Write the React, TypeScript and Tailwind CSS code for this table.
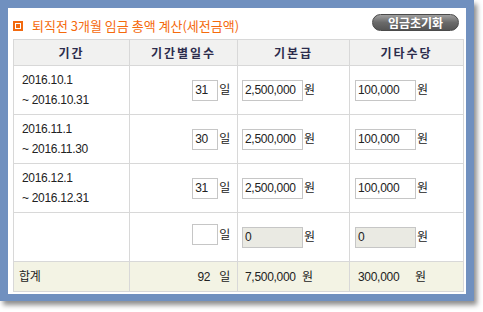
import React from "react";

const rows = [
  { from: "2016.10.1", to: "~ 2016.10.31", days: "31", pay: "2,500,000", etc: "100,000", disabled: false },
  { from: "2016.11.1", to: "~ 2016.11.30", days: "30", pay: "2,500,000", etc: "100,000", disabled: false },
  { from: "2016.12.1", to: "~ 2016.12.31", days: "31", pay: "2,500,000", etc: "100,000", disabled: false },
  { from: "", to: "", days: "", pay: "0", etc: "0", disabled: true },
];

function Input({ value, width, disabled }: { value: string; width: string; disabled?: boolean }) {
  return (
    <span
      className={`inline-block h-[21px] ${width} border border-[#c6c6c6] text-left pl-[2px] leading-[19px] align-middle ${
        disabled ? "bg-[#eaeae3]" : "bg-white"
      }`}
    >
      {value}
    </span>
  );
}

export default function App() {
  return (
    <div className="w-[483px] h-[312px] bg-white font-['Liberation_Sans','Noto_Sans_CJK_KR',sans-serif] text-[12px] tracking-[-0.3px] text-[#222]">
      <div className="w-[474px] h-[301px] bg-[#7090bf] pt-[8px] pl-[8px] pr-[8px] pb-[7px] shadow-[3px_4px_5px_rgba(0,0,0,0.45)]">
        <div className="bg-white h-full pl-[5px] pr-[3px]">
          <div className="flex justify-between h-[31px]">
            <div className="flex items-center mt-[12px] h-[12px]">
              <span className="w-[10px] h-[10px] border-2 border-[#f26a10] flex items-center justify-center mr-[9px]">
                <span className="w-[4px] h-[4px] bg-[#f26a10]" />
              </span>
              <span className="text-[#f56a0c] text-[13px] tracking-[0px] font-['Noto_Sans_CJK_KR',sans-serif] leading-[12px]">
                퇴직전 3개월 임금 총액 계산(세전금액)
              </span>
            </div>
            <button className="mt-[6px] mr-[4px] w-[87px] h-[17px] rounded-full border border-[#4a4a4a] bg-gradient-to-b from-[#a0a0a0] via-[#6a6a6a] to-[#555] text-white font-bold text-[12px] leading-[15px] tracking-[0px] font-['Noto_Sans_CJK_KR',sans-serif]">
              임금초기화
            </button>
          </div>
          <table className="w-[450px] table-fixed border-collapse">
            <colgroup>
              <col className="w-[116px]" />
              <col className="w-[108px]" />
              <col className="w-[112px]" />
              <col className="w-[114px]" />
            </colgroup>
            <thead>
              <tr className="h-[26px] bg-[#f1f1f0]">
                {["기간", "기간별일수", "기본급", "기타수당"].map((h) => (
                  <th
                    key={h}
                    className="border border-[#d8d8d8] font-bold text-[12px] tracking-[2px] text-[#2c2c4c] font-['Noto_Sans_CJK_KR',sans-serif] p-0"
                  >
                    {h}
                  </th>
                ))}
              </tr>
            </thead>
            <tbody>
              {rows.map((r, i) => (
                <tr key={i} className="h-[49px]">
                  <td className="border border-[#d8d8d8] pl-[8px] leading-[20px] align-middle">
                    {r.from && (
                      <>
                        <div>{r.from}</div>
                        <div>{r.to}</div>
                      </>
                    )}
                  </td>
                  <td className="border border-[#d8d8d8] text-right pr-[7px] align-middle">
                    <span className="inline-flex items-center gap-[1px]">
                      <Input value={r.days} width="w-[26px]" />
                      <span>일</span>
                    </span>
                  </td>
                  <td className="border border-[#d8d8d8] pl-[4px] align-middle">
                    <span className="inline-flex items-center gap-[1px]">
                      <Input value={r.pay} width="w-[61px]" disabled={r.disabled} />
                      <span>원</span>
                    </span>
                  </td>
                  <td className="border border-[#d8d8d8] pl-[5px] align-middle">
                    <span className="inline-flex items-center gap-[1px]">
                      <Input value={r.etc} width="w-[61px]" disabled={r.disabled} />
                      <span>원</span>
                    </span>
                  </td>
                </tr>
              ))}
              <tr className="h-[30px] bg-[#f3f3e4]">
                <td className="border border-[#d8d8d8] pl-[5px]">합계</td>
                <td className="border border-[#d8d8d8] text-right pr-[7px]">
                  92<span className="ml-[9px]">일</span>
                </td>
                <td className="border border-[#d8d8d8] pl-[7px]">
                  <span className="inline-block w-[57px]">7,500,000</span>원
                </td>
                <td className="border border-[#d8d8d8] pl-[8px]">
                  <span className="inline-block w-[57px]">300,000</span>원
                </td>
              </tr>
            </tbody>
          </table>
        </div>
      </div>
    </div>
  );
}
